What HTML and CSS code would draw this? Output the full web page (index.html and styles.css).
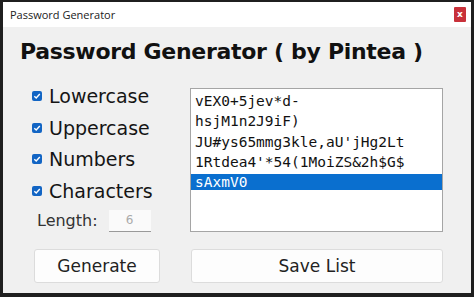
FILE: index.html
```html
<!DOCTYPE html>
<html lang="en">
<head>
  <meta charset="UTF-8">
  <title>Password Generator</title>
  <link rel="stylesheet" href="styles.css">
</head>
<body>
  <div class="window">
    <div class="titlebar">
      <span class="title">Password Generator</span>
      <span class="close">x</span>
    </div>
    <div class="content">
      <h1>Password Generator ( by Pintea )</h1>
      <div class="main">
        <div class="options">
          <label class="opt"><span class="box"><svg width="8" height="8" viewBox="0 0 8 8"><path d="M1.3 4.2 L3.2 6 L6.8 2" fill="none" stroke="#fff" stroke-width="1.4"/></svg></span>Lowercase</label>
          <label class="opt"><span class="box"><svg width="8" height="8" viewBox="0 0 8 8"><path d="M1.3 4.2 L3.2 6 L6.8 2" fill="none" stroke="#fff" stroke-width="1.4"/></svg></span>Uppercase</label>
          <label class="opt"><span class="box"><svg width="8" height="8" viewBox="0 0 8 8"><path d="M1.3 4.2 L3.2 6 L6.8 2" fill="none" stroke="#fff" stroke-width="1.4"/></svg></span>Numbers</label>
          <label class="opt"><span class="box"><svg width="8" height="8" viewBox="0 0 8 8"><path d="M1.3 4.2 L3.2 6 L6.8 2" fill="none" stroke="#fff" stroke-width="1.4"/></svg></span>Characters</label>
          <div class="length">
            <span>Length:</span>
            <span class="len-input">6</span>
          </div>
        </div>
        <div class="list">
          <div class="item">vEX0+5jev*d-</div>
          <div class="item">hsjM1n2J9iF)</div>
          <div class="item">JU#ys65mmg3kle,aU'jHg2Lt</div>
          <div class="item">1Rtdea4'*54(1MoiZS&amp;2h$G$</div>
          <div class="item selected">sAxmV0</div>
        </div>
      </div>
      <div class="buttons">
        <button class="btn gen">Generate</button>
        <button class="btn save">Save List</button>
      </div>
    </div>
  </div>
</body>
</html>
```

FILE: styles.css
```css
body {
  margin: 0;
  background-color: #1f1f1f;
  font-family: "DejaVu Sans", sans-serif;
}

.window {
  margin: 2px 3px 0 3px;
  height: 291px;
  background-color: #f0f0f0;
  display: flex;
  flex-direction: column;
}

.titlebar {
  height: 25px;
  background-color: #fff;
  display: flex;
  align-items: center;
  justify-content: space-between;
  padding: 0 5px 0 7px;
}

.title {
  font-family: "Open Sans", sans-serif;
  font-size: 11px;
  color: #222;
}

.close {
  width: 12px;
  height: 15px;
  border-radius: 1px;
  background-color: #c8313a;
  color: #fff;
  font-size: 9px;
  font-weight: bold;
  display: flex;
  align-items: center;
  justify-content: center;
  line-height: 1;
}

.content {
  flex: 1;
  padding: 0 28px 0 31px;
}

h1 {
  margin: 12px 0 0 -14px;
  font-size: 22px;
  font-weight: bold;
  color: #111;
  letter-spacing: -0.3px;
  white-space: nowrap;
}

.main {
  display: flex;
  margin-top: 24px;
  height: 144px;
}

.options {
  width: 156px;
  margin-top: -8px;
  display: flex;
  flex-direction: column;
}

.opt {
  display: flex;
  flex-shrink: 0;
  align-items: center;
  height: 31.7px;
  font-size: 19px;
  color: #151515;
}

.box {
  width: 10px;
  height: 10px;
  border-radius: 2px;
  background-color: #1265c4;
  margin-right: 7px;
  margin-left: -2px;
  display: flex;
  align-items: center;
  justify-content: center;
}

.length {
  display: flex;
  flex-shrink: 0;
  align-items: center;
  margin-top: 3px;
  margin-left: 3px;
  font-size: 16px;
  color: #333;
}

.len-input {
  margin-left: 11px;
  width: 42px;
  height: 21px;
  background-color: #fafafa;
  border-bottom: 1px solid #999;
  color: #aaa;
  font-size: 12px;
  display: flex;
  align-items: center;
  justify-content: center;
}

.list {
  flex: 1;
  background-color: #fff;
  border: 1px solid #a5a5a5;
  padding: 4px 0 0 0;
  box-sizing: border-box;
}

.item {
  font-family: "DejaVu Sans Mono", monospace;
  font-size: 14.5px;
  line-height: 16px;
  height: 16px;
  margin-bottom: 4.3px;
  padding-left: 4px;
  color: #111;
}

.item.selected {
  background-color: #0a6fcf;
  color: #fff;
}

.buttons {
  display: flex;
  margin-top: 17px;
  gap: 31px;
}

.btn {
  height: 34px;
  background-color: #fdfdfd;
  border: 1px solid #dcdcdc;
  border-radius: 3px;
  font-family: "DejaVu Sans", sans-serif;
  font-size: 17px;
  color: #222;
}

.gen {
  width: 126px;
}

.save {
  flex: 1;
}
```
